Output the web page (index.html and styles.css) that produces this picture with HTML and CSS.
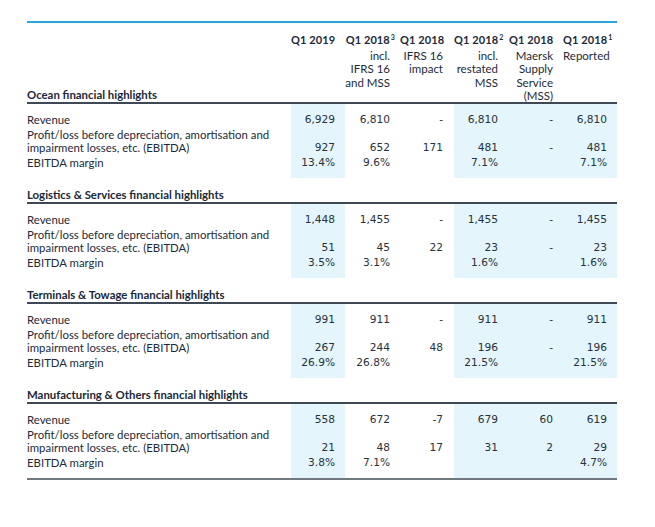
FILE: index.html
```html
<!DOCTYPE html>
<html lang="en">
<head>
<meta charset="utf-8">
<title>Segment financial highlights</title>
<link rel="stylesheet" href="styles.css">
</head>
<body>
<div class="page">
<table class="fin">
  <colgroup>
    <col class="w-label">
    <col class="w-54">
    <col class="w-55">
    <col class="w-54">
    <col class="w-55">
    <col class="w-54">
    <col class="w-54">
  </colgroup>
  <thead>
    <tr class="head">
      <th class="label section">Ocean financial highlights</th>
      <th class="num p10"><span class="q">Q1 2019</span></th>
      <th class="num p10"><span class="q">Q1 2018<sup>3</sup></span><span class="sub">incl.<br>IFRS 16<br>and MSS</span></th>
      <th class="num p11"><span class="q">Q1 2018</span><span class="sub">IFRS 16<br>impact</span></th>
      <th class="num p11"><span class="q">Q1 2018<sup>2</sup></span><span class="sub">incl.<br>restated<br>MSS</span></th>
      <th class="num p10"><span class="q">Q1 2018</span><span class="sub">Maersk<br>Supply<br>Service<br>(MSS)</span></th>
      <th class="num p10"><span class="q">Q1 2018<sup>1</sup></span><span class="sub">Reported</span></th>
    </tr>
  </thead>
  <tbody>
    <tr class="r-rev">
      <td class="label">Revenue</td>
      <td class="num p10 sh">6,929</td>
      <td class="num p10">6,810</td>
      <td class="num p11">-</td>
      <td class="num p11 sh">6,810</td>
      <td class="num p10 sh dash">-</td>
      <td class="num p10 sh">6,810</td>
    </tr>
    <tr class="r-ebitda">
      <td class="label">Profit/loss before depreciation, amortisation and<br>impairment losses, etc. (EBITDA)</td>
      <td class="num p10 sh">927</td>
      <td class="num p10">652</td>
      <td class="num p11">171</td>
      <td class="num p11 sh">481</td>
      <td class="num p10 sh dash">-</td>
      <td class="num p10 sh">481</td>
    </tr>
    <tr class="r-margin">
      <td class="label">EBITDA margin</td>
      <td class="num p10 sh">13.4%</td>
      <td class="num p10">9.6%</td>
      <td class="num p11"></td>
      <td class="num p11 sh">7.1%</td>
      <td class="num p10 sh"></td>
      <td class="num p10 sh">7.1%</td>
    </tr>
  </tbody>
  <tbody>
    <tr class="r-title">
      <td class="label section" colspan="7">Logistics &amp; Services financial highlights</td>
    </tr>
    <tr class="r-rev">
      <td class="label">Revenue</td>
      <td class="num p10 sh">1,448</td>
      <td class="num p10">1,455</td>
      <td class="num p11">-</td>
      <td class="num p11 sh">1,455</td>
      <td class="num p10 sh dash">-</td>
      <td class="num p10 sh">1,455</td>
    </tr>
    <tr class="r-ebitda">
      <td class="label">Profit/loss before depreciation, amortisation and<br>impairment losses, etc. (EBITDA)</td>
      <td class="num p10 sh">51</td>
      <td class="num p10">45</td>
      <td class="num p11">22</td>
      <td class="num p11 sh">23</td>
      <td class="num p10 sh dash">-</td>
      <td class="num p10 sh">23</td>
    </tr>
    <tr class="r-margin">
      <td class="label">EBITDA margin</td>
      <td class="num p10 sh">3.5%</td>
      <td class="num p10">3.1%</td>
      <td class="num p11"></td>
      <td class="num p11 sh">1.6%</td>
      <td class="num p10 sh"></td>
      <td class="num p10 sh">1.6%</td>
    </tr>
  </tbody>
  <tbody>
    <tr class="r-title">
      <td class="label section" colspan="7">Terminals &amp; Towage financial highlights</td>
    </tr>
    <tr class="r-rev">
      <td class="label">Revenue</td>
      <td class="num p10 sh">991</td>
      <td class="num p10">911</td>
      <td class="num p11">-</td>
      <td class="num p11 sh">911</td>
      <td class="num p10 sh dash">-</td>
      <td class="num p10 sh">911</td>
    </tr>
    <tr class="r-ebitda">
      <td class="label">Profit/loss before depreciation, amortisation and<br>impairment losses, etc. (EBITDA)</td>
      <td class="num p10 sh">267</td>
      <td class="num p10">244</td>
      <td class="num p11">48</td>
      <td class="num p11 sh">196</td>
      <td class="num p10 sh dash">-</td>
      <td class="num p10 sh">196</td>
    </tr>
    <tr class="r-margin">
      <td class="label">EBITDA margin</td>
      <td class="num p10 sh">26.9%</td>
      <td class="num p10">26.8%</td>
      <td class="num p11"></td>
      <td class="num p11 sh">21.5%</td>
      <td class="num p10 sh"></td>
      <td class="num p10 sh">21.5%</td>
    </tr>
  </tbody>
  <tbody class="last">
    <tr class="r-title">
      <td class="label section" colspan="7">Manufacturing &amp; Others financial highlights</td>
    </tr>
    <tr class="r-rev">
      <td class="label">Revenue</td>
      <td class="num p10 sh">558</td>
      <td class="num p10">672</td>
      <td class="num p11">-7</td>
      <td class="num p11 sh">679</td>
      <td class="num p10 sh">60</td>
      <td class="num p10 sh">619</td>
    </tr>
    <tr class="r-ebitda">
      <td class="label">Profit/loss before depreciation, amortisation and<br>impairment losses, etc. (EBITDA)</td>
      <td class="num p10 sh">21</td>
      <td class="num p10">48</td>
      <td class="num p11">17</td>
      <td class="num p11 sh">31</td>
      <td class="num p10 sh">2</td>
      <td class="num p10 sh">29</td>
    </tr>
    <tr class="r-margin">
      <td class="label">EBITDA margin</td>
      <td class="num p10 sh">3.8%</td>
      <td class="num p10">7.1%</td>
      <td class="num p11"></td>
      <td class="num p11 sh"></td>
      <td class="num p10 sh"></td>
      <td class="num p10 sh">4.7%</td>
    </tr>
  </tbody>
</table>
</div>
</body>
</html>
```
FILE: styles.css
```css
html, body {
  margin: 0;
  padding: 0;
  background: #ffffff;
}

.page {
  padding: 21px 0 0 27px;
}

.fin {
  border-collapse: collapse;
  table-layout: fixed;
  width: 590px;
  font-family: "Lato", "Open Sans", sans-serif;
  font-size: 11px;
  line-height: 13px;
  color: #1c2a3a;
  border-top: 2px solid #29a7d8;
}

.w-label { width: 264px; }
.w-54 { width: 54px; }
.w-55 { width: 55px; }

th, td {
  padding: 0;
  font-weight: normal;
}

.label {
  text-align: left;
  font-size: 11.4px;
  white-space: nowrap;
}

.num {
  text-align: right;
  white-space: nowrap;
}

.p10 { padding-right: 10px; }
.p11 { padding-right: 11px; }

.sh {
  background: #e4f5fb;
}

/* header */
.head th {
  vertical-align: top;
  padding-top: 10px;
  border-bottom: 2px solid #3e4955;
}

.head th.section {
  vertical-align: bottom;
  padding-bottom: 1.5px;
}

.q {
  display: block;
  font-weight: 700;
  line-height: 13px;
  margin-bottom: 3px;
  letter-spacing: 0.1px;
}

.q sup {
  font-size: 7px;
  line-height: 0;
  vertical-align: 4px;
  margin-left: 1px;
  margin-right: -5px;
}

.sub {
  display: block;
  font-size: 11.5px;
  line-height: 13.3px;
}

.section {
  font-weight: 700;
  color: #1a2838;
}

/* body */
td.num {
  font-family: "DejaVu Sans", "Verdana", sans-serif;
  font-size: 10.6px;
  color: #28323d;
}

.r-rev td {
  padding-top: 8.5px;
  padding-bottom: 2px;
}

.r-ebitda td {
  vertical-align: bottom;
}

.r-margin td {
  padding-top: 2px;
  padding-bottom: 9.5px;
}

.r-title td {
  padding-top: 9.5px;
  padding-bottom: 1.5px;
  border-bottom: 2px solid #3e4955;
}

.last tr:last-child td {
  border-bottom: 2px solid #72787f;
}
```
